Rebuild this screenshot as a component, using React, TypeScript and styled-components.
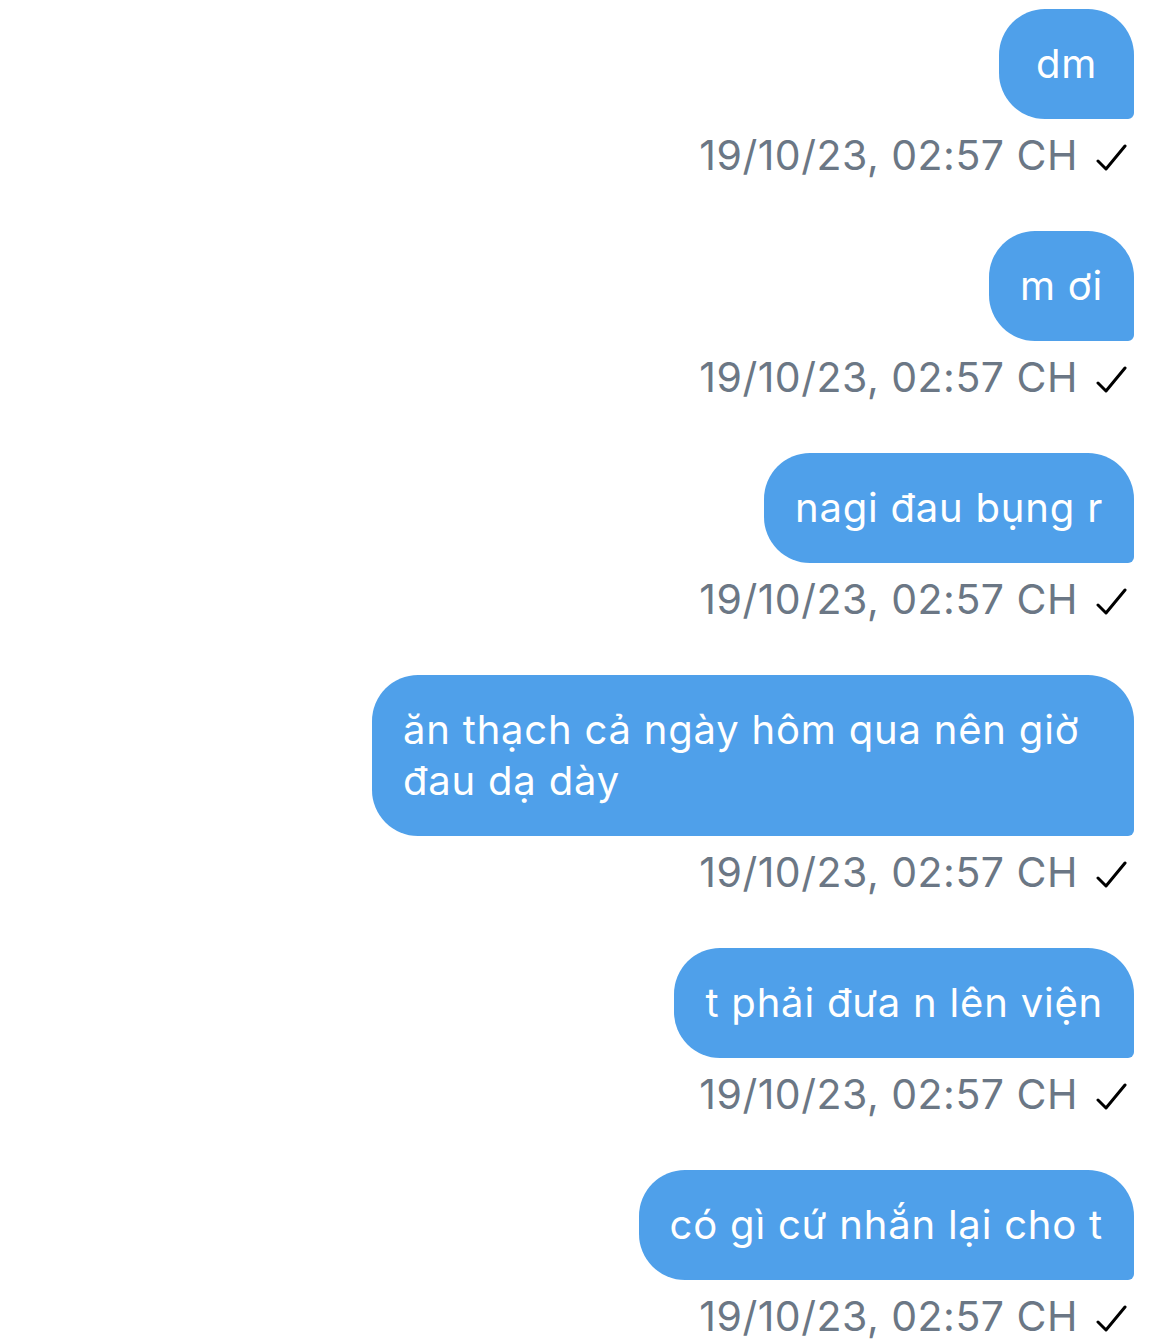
import React from "react";
import styled, { createGlobalStyle } from "styled-components";

interface Message {
  text: string;
  time: string;
}

const messages: Message[] = [
  { text: "dm", time: "19/10/23, 02:57 CH" },
  { text: "m ơi", time: "19/10/23, 02:57 CH" },
  { text: "nagi đau bụng r", time: "19/10/23, 02:57 CH" },
  { text: "ăn thạch cả ngày hôm qua nên giờ đau dạ dày", time: "19/10/23, 02:57 CH" },
  { text: "t phải đưa n lên viện", time: "19/10/23, 02:57 CH" },
  { text: "có gì cứ nhắn lại cho t", time: "19/10/23, 02:57 CH" },
];

const CheckIcon = () => (
  <StyledCheck viewBox="0 0 32 32" fill="none">
    <path
      d="M2 19 L10 27 L29 4"
      stroke="#000"
      strokeWidth="3"
      strokeLinecap="round"
      strokeLinejoin="round"
    />
  </StyledCheck>
);

const App = () => {
  return (
    <>
      <GlobalStyle />
      <StyledChat>
        {messages.map((m, i) => (
          <StyledGroup key={i}>
            <StyledBubble>
              <span>{m.text}</span>
            </StyledBubble>
            <StyledMeta>
              <StyledTime>{m.time}</StyledTime>
              <CheckIcon />
            </StyledMeta>
          </StyledGroup>
        ))}
      </StyledChat>
    </>
  );
};

export default App;

// ========= Start Styled Elements ==========
const GlobalStyle = createGlobalStyle`
  html, body {
    margin: 0;
    padding: 0;
    background: #ffffff;
    font-family: Inter, "Noto Sans", sans-serif;
  }
`;

const StyledChat = styled.div`
  display: flex;
  flex-direction: column;
  align-items: flex-end;
  gap: 54px;
  padding: 9px 36px 0 0;
  height: 1339px;
  box-sizing: border-box;
  overflow: hidden;
`;

const StyledGroup = styled.div`
  display: flex;
  flex-direction: column;
  align-items: flex-end;
`;

const StyledBubble = styled.div`
  box-sizing: border-box;
  display: flex;
  justify-content: center;
  max-width: 762px;
  min-width: 135px;
  padding: 29px 31px 30px;
  background: #4fa0ea;
  color: #ffffff;
  font-size: 40px;
  letter-spacing: 0.8px;
  line-height: 51px;
  text-align: left;
  border-radius: 46px 46px 6px 46px;
`;

const StyledMeta = styled.div`
  display: flex;
  align-items: center;
  gap: 18px;
  margin-top: 14px;
  padding-right: 6px;
  height: 44px;
`;

const StyledTime = styled.span`
  color: #6b7785;
  font-size: 41px;
  letter-spacing: 0.5px;
  line-height: 44px;
`;

const StyledCheck = styled.svg`
  width: 32px;
  height: 32px;
  margin-top: 6px;
`;
// ========= End Styled Elements ==========
